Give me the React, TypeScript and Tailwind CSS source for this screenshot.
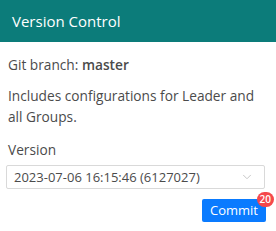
import { ChevronDown } from "lucide-react";

// Version control panel: branch info, version picker and a commit button with pending count.
export default function App() {
  return (
    <div className="w-[276px] h-[231px] bg-white text-[#4b4b4b] font-['Open_Sans',sans-serif]">
      <div className="h-[42px] bg-[#0c7c7a] px-3 flex items-center text-white text-[15px]">Version Control</div>
      <div className="px-2 text-[13.7px] leading-[21px]">
        <p className="mt-3">
          Git branch: <span className="font-semibold">master</span>
        </p>
        <p className="mt-[10px]">Includes configurations for Leader and all Groups.</p>
        <p className="mt-[12px]">Version</p>
        <div className="mt-[5px] mr-[3px] h-[24px] -ml-[2px] border border-[#d9d9d9] rounded-[2px] flex items-center justify-between pl-[7px] pr-[10px]">
          <span className="text-[13px]">2023-07-06 16:15:46 (6127027)</span>
          <ChevronDown className="w-[14px] h-[14px] text-[#bfbfbf]" strokeWidth={1.5} />
        </div>
        <div className="flex justify-end mt-[10px] pr-[2px]">
          <div className="relative">
            <button className="h-[23px] w-[64px] bg-[#0a7bff] text-white text-[13px] rounded-[2px]">Commit</button>
            <span className="absolute -top-[7px] -right-[8px] h-[15px] min-w-[17px] px-[3px] rounded-full bg-[#f5484b] text-white text-[10px] leading-[15px] text-center font-semibold">20</span>
          </div>
        </div>
      </div>
    </div>
  );
}
